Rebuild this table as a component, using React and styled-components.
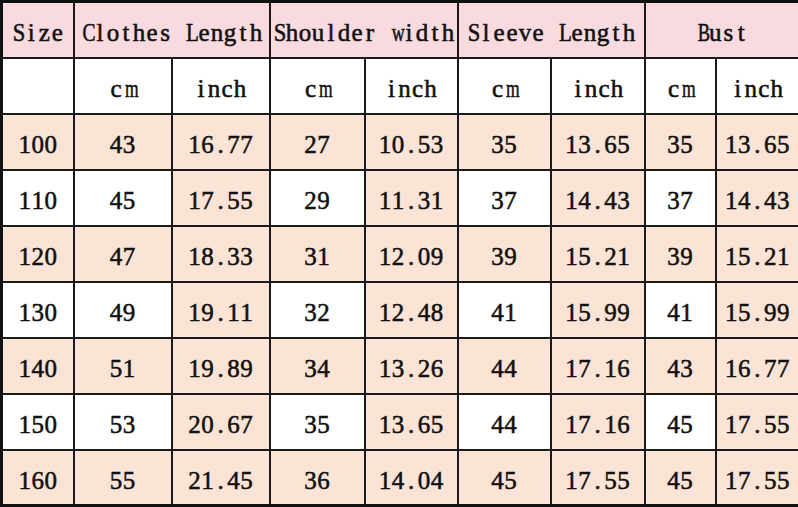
import React from "react";
import styled, { createGlobalStyle } from "styled-components";

const GlobalStyle = createGlobalStyle`
  html, body {
    margin: 0;
    padding: 0;
    background: #ffffff;
  }
`;

const widths = [72, 98, 98, 95, 93, 93, 94, 71, 84];

const groups = ["Clothes Length", "Shoulder width", "Sleeve Length", "Bust"];

const rows = [
  ["100", "43", "16.77", "27", "10.53", "35", "13.65", "35", "13.65"],
  ["110", "45", "17.55", "29", "11.31", "37", "14.43", "37", "14.43"],
  ["120", "47", "18.33", "31", "12.09", "39", "15.21", "39", "15.21"],
  ["130", "49", "19.11", "32", "12.48", "41", "15.99", "41", "15.99"],
  ["140", "51", "19.89", "34", "13.26", "44", "17.16", "43", "16.77"],
  ["150", "53", "20.67", "35", "13.65", "44", "17.16", "45", "17.55"],
  ["160", "55", "21.45", "36", "14.04", "45", "17.55", "45", "17.55"],
];

const fills = {
  pink: "#f9dadf",
  peach: "#fbe4d6",
  white: "#ffffff",
};

// wide latin letters get squeezed into the half-width cell, like a song face does
const squeeze = { m: 0.7, w: 0.72, C: 0.78, B: 0.74, L: 0.84, S: 0.9 };

const Table = styled.table`
  width: 798px;
  height: 507px;
  border-collapse: collapse;
  table-layout: fixed;
  border: 3px solid #111;
  font-family: "Liberation Serif", "Times New Roman", serif;
  font-size: 25px;
  color: #111;
`;

const Row = styled.tr`
  height: 56px;
`;

const Cell = styled.td`
  border: 2px solid #1a1a1a;
  padding: 8px 0 0;
  text-align: center;
  vertical-align: middle;
  white-space: nowrap;
  font-family: "Liberation Serif", "Times New Roman", serif;
  font-size: 25px;
  line-height: 1.15;
  background: ${(p) => fills[p.$fill] || fills.white};
  -webkit-text-stroke: 0.55px #111;
`;

const Glyph = styled.span`
  display: inline-block;
  width: 13px;
  text-align: center;
  transform: scaleX(${(p) => p.$scale || 1});
`;

const Mono = ({ text }) => (
  <>
    {text.split("").map((ch, i) => (
      <Glyph key={i} $scale={squeeze[ch]}>
        {ch === " " ? "\u00a0" : ch}
      </Glyph>
    ))}
  </>
);

const fillFor = (rowIndex, colIndex) => {
  if (rowIndex % 2 === 0) return "peach";
  return colIndex > 0 && colIndex % 2 === 0 ? "peach" : "white";
};

export default function App() {
  return (
    <>
      <GlobalStyle />
      <Table>
        <colgroup>
          {widths.map((w, i) => (
            <col key={i} style={{ width: w }} />
          ))}
        </colgroup>
        <tbody>
          <Row>
            <Cell $fill="pink">
              <Mono text="Size" />
            </Cell>
            {groups.map((g) => (
              <Cell key={g} colSpan={2} $fill="pink">
                <Mono text={g} />
              </Cell>
            ))}
          </Row>
          <Row>
            <Cell />
            {groups.map((g) => (
              <React.Fragment key={g}>
                <Cell>
                  <Mono text="cm" />
                </Cell>
                <Cell>
                  <Mono text="inch" />
                </Cell>
              </React.Fragment>
            ))}
          </Row>
          {rows.map((r, ri) => (
            <Row key={r[0]}>
              {r.map((v, ci) => (
                <Cell key={ci} $fill={fillFor(ri, ci)}>
                  <Mono text={v} />
                </Cell>
              ))}
            </Row>
          ))}
        </tbody>
      </Table>
    </>
  );
}
